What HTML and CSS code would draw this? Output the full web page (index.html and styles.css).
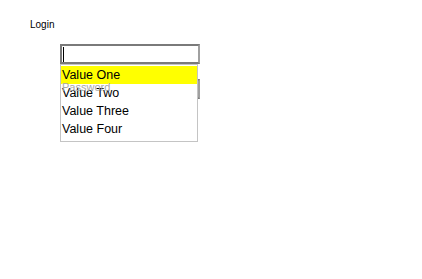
FILE: index.html
```html
<!DOCTYPE html>
<html lang="en">
  <head>
    <title>Login</title>
    <meta charset="UTF-8" />
    <meta name="viewport" content="width=device-width" />
    <link rel="stylesheet" href="styles.css">
  </head>
  <body>
    <section class="login">
      <div class="login__title">Login</div>
      <form class="login__form">
        <div class="combo">
          <input class="field" type="text" name="user">
          <span class="combo__caret"></span>
          <ul class="suggest">
            <li class="suggest__item suggest__item--active">Value One</li>
            <li class="suggest__item">Value Two</li>
            <li class="suggest__item">Value Three</li>
            <li class="suggest__item">Value Four</li>
          </ul>
        </div>
        <div class="pw">
          <input class="field" type="password" name="password">
          <span class="pw__ghost">Password</span>
        </div>
      </form>
    </section>
  </body>
</html>
```

FILE: styles.css
```css
html,
body {
  min-height: 100%;
}

body {
  margin: 0;
  min-height: 100vh;
  background: #ffffff;
  font-family: "Liberation Sans", Arial, sans-serif;
  color: #000000;
}

.login {
  min-height: 200px;
  padding: 19px 0 0 30px;
}

.login__title {
  font-size: 10px;
  line-height: 12px;
}

.login__form {
  margin: 13px 0 0 30px;
}

.field {
  box-sizing: border-box;
  display: block;
  width: 140px;
  height: 20px;
  margin: 0;
  padding: 0 2px;
  border: 2px solid #7a7a7a;
  border-right-color: #a0a0a0;
  background: #ffffff;
  font-family: inherit;
  font-size: 11px;
  outline: none;
}

/* user box with its open list */
.combo {
  position: relative;
  z-index: 2;
}

.combo__caret {
  position: absolute;
  left: 3px;
  top: 3px;
  width: 1px;
  height: 15px;
  background: #000000;
}

.suggest {
  position: absolute;
  top: 20px;
  left: 0;
  box-sizing: border-box;
  width: 138px;
  height: 78px;
  margin: 0;
  padding: 1px 0 3px;
  list-style: none;
  background: #ffffff;
  border: 1px solid #c4c4c4;
}

.suggest__item {
  height: 18px;
  padding-left: 1px;
  font-size: 12.5px;
  line-height: 18px;
  white-space: nowrap;
}

.suggest__item--active {
  background: #ffff00;
}

/* password box, mostly under the list */
.pw {
  position: relative;
  margin-top: 15px;
}

.pw__ghost {
  position: absolute;
  z-index: 3;
  left: 2px;
  top: -2px;
  font-size: 11px;
  line-height: 20px;
  color: #a8a8a8;
  pointer-events: none;
}
```
